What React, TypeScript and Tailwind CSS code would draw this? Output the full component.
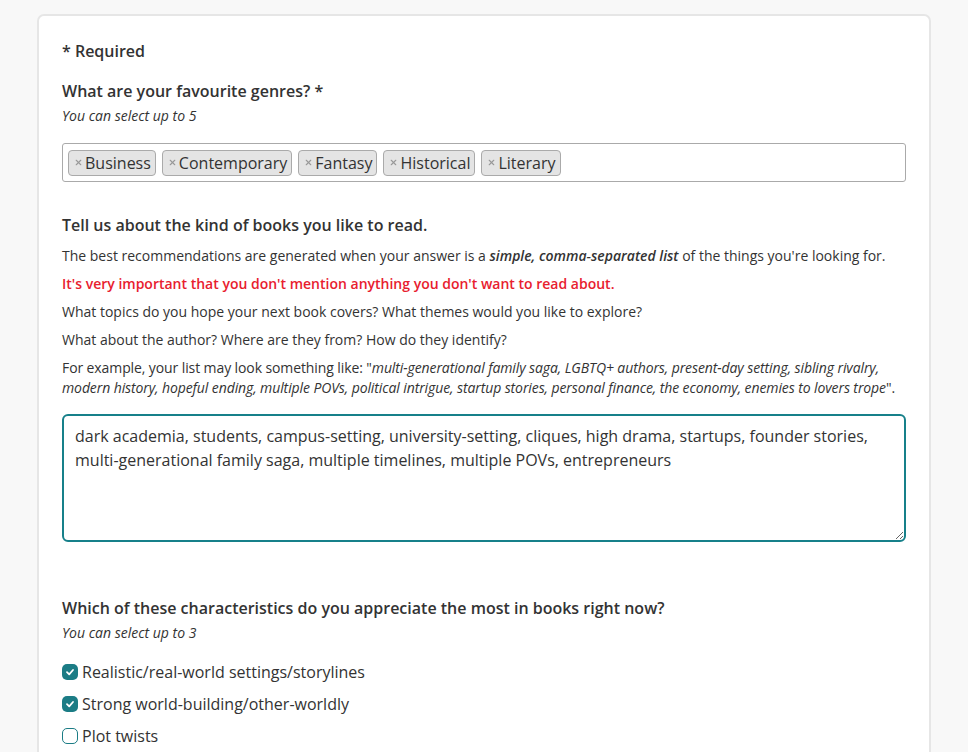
import { X } from "lucide-react"

const genres = ["Business", "Contemporary", "Fantasy", "Historical", "Literary"]

const traits = [
  { label: "Realistic/real-world settings/storylines", checked: true },
  { label: "Strong world-building/other-worldly", checked: true },
  { label: "Plot twists", checked: false },
]

function Check({ checked }: { checked: boolean }) {
  if (!checked) {
    return <span className="w-4 h-4 rounded-[5px] border border-[#1b7c85] bg-white shrink-0" />
  }
  return (
    <span className="w-4 h-4 rounded-[5px] bg-[#1b7c85] shrink-0 flex items-center justify-center">
      <svg width="10" height="10" viewBox="0 0 10 10" fill="none">
        <path d="M2 5.2 L4.2 7.3 L8 3" stroke="white" strokeWidth="1.8" strokeLinecap="round" strokeLinejoin="round" />
      </svg>
    </span>
  )
}

export default function App() {
  return (
    <div className="min-h-screen bg-[#f8f8f8] pt-[14px] pl-[37px] pr-[37px] text-[#333] font-['Open_Sans',sans-serif]">
      <div className="w-[894px] bg-white border-2 border-[#e6e6e6] rounded-[7px] px-[23px] pt-[23px] pb-10">
        {/* Required note */}
        <p className="text-base font-semibold leading-6">* Required</p>

        {/* Genres */}
        <div className="mt-4">
          <h2 className="text-base font-semibold leading-6">What are your favourite genres? *</h2>
          <p className="text-sm italic leading-5 mt-[3px]">You can select up to 5</p>
          <div className="mt-[17px] h-[39px] border border-[#aaa] rounded-[3px] flex items-center gap-[6px] px-[5px]">
            {genres.map((g) => (
              <span
                key={g}
                className="h-[26px] flex items-center bg-[#e4e4e4] border border-[#aaa] rounded-[4px] pl-[5px] pr-[4px] text-base leading-none"
              >
                <X size={9} strokeWidth={3} className="text-[#999] mr-[2px]" />
                {g}
              </span>
            ))}
          </div>
        </div>

        {/* Books text */}
        <div className="mt-[31px]">
          <h2 className="text-base font-semibold leading-6">Tell us about the kind of books you like to read.</h2>
          <div className="text-sm leading-5 mt-[9px] flex flex-col gap-2">
            <p>
              The best recommendations are generated when your answer is a{" "}
              <span className="font-semibold italic">simple, comma-separated list</span> of the things you're looking for.
            </p>
            <p className="text-[#e8202e] font-semibold">It's very important that you don't mention anything you don't want to read about.</p>
            <p>What topics do you hope your next book covers? What themes would you like to explore?</p>
            <p>What about the author? Where are they from? How do they identify?</p>
            <p className="tracking-[-0.1px]">
              For example, your list may look something like: "
              <span className="italic">
                multi-generational family saga, LGBTQ+ authors, present-day setting, sibling rivalry, modern history, hopeful
                ending, multiple POVs, political intrigue, startup stories, personal finance, the economy, enemies to lovers trope
              </span>
              ".
            </p>
          </div>
          <textarea
            readOnly
            className="mt-4 block w-full h-[128px] border-2 border-[#17808a] rounded-[6px] px-[11px] pt-2 pb-2 text-base leading-6 text-[#333] outline-none"
            defaultValue="dark academia, students, campus-setting, university-setting, cliques, high drama, startups, founder stories, multi-generational family saga, multiple timelines, multiple POVs, entrepreneurs"
          />
        </div>

        {/* Characteristics */}
        <div className="mt-[54px]">
          <h2 className="text-base font-semibold leading-6">
            Which of these characteristics do you appreciate the most in books right now?
          </h2>
          <p className="text-sm italic leading-5 mt-[3px]">You can select up to 3</p>
          <div className="mt-[17px] flex flex-col gap-2">
            {traits.map((t) => (
              <label key={t.label} className="flex items-center gap-1 text-base leading-6">
                <Check checked={t.checked} />
                {t.label}
              </label>
            ))}
          </div>
        </div>
      </div>
    </div>
  )
}
